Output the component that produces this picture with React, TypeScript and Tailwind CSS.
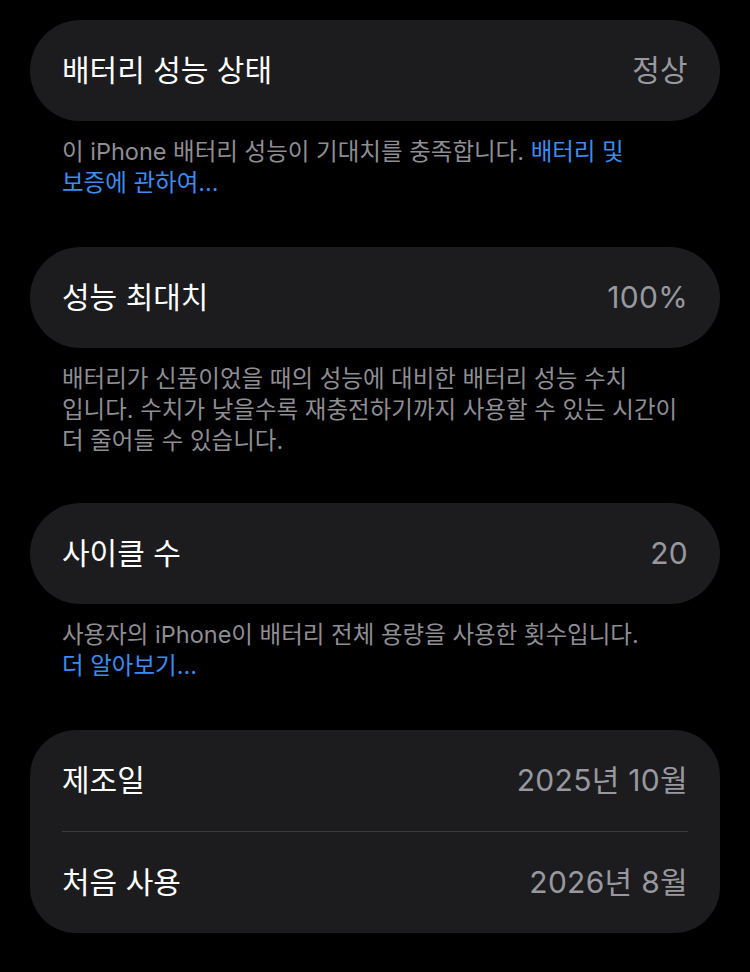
import React from 'react';

const FONT = 'font-["Inter","Noto_Sans_CJK_KR",sans-serif]';

const Row: React.FC<{ label: string; value: string }> = ({ label, value }) => (
  <div className="flex h-[101px] items-center justify-between px-[32px]">
    <span className="text-[30px] text-white">{label}</span>
    <span className="text-[30px] text-[#98989f] tracking-[0.3px]">{value}</span>
  </div>
);

const Footer: React.FC<{ children: React.ReactNode }> = ({ children }) => (
  <div className="px-[32px] pt-[15px] text-[23.5px] leading-[31px] text-[#8e8e93]">
    {children}
  </div>
);

const App: React.FC = () => {
  return (
    <div className={`min-h-[972px] w-[750px] bg-black px-[30px] pt-[20px] ${FONT}`}>
      <div className="rounded-full bg-[#1c1c1e]">
        <Row label="배터리 성능 상태" value="정상" />
      </div>
      <Footer>
        <div className="whitespace-nowrap">
          이 iPhone 배터리 성능이 기대치를 충족합니다. <span className="text-[#3b8cf2]">배터리 및</span>
        </div>
        <div className="whitespace-nowrap text-[#3b8cf2]">보증에 관하여...</div>
      </Footer>

      <div className="mt-[49px] rounded-full bg-[#1c1c1e]">
        <Row label="성능 최대치" value="100%" />
      </div>
      <Footer>
        <div className="whitespace-nowrap">배터리가 신품이었을 때의 성능에 대비한 배터리 성능 수치</div>
        <div className="whitespace-nowrap">입니다. 수치가 낮을수록 재충전하기까지 사용할 수 있는 시간이</div>
        <div className="whitespace-nowrap">더 줄어들 수 있습니다.</div>
      </Footer>

      <div className="mt-[47px] rounded-full bg-[#1c1c1e]">
        <Row label="사이클 수" value="20" />
      </div>
      <Footer>
        <div className="whitespace-nowrap">사용자의 iPhone이 배터리 전체 용량을 사용한 횟수입니다.</div>
        <div className="whitespace-nowrap text-[#3b8cf2]">더 알아보기...</div>
      </Footer>

      <div className="mt-[49px] rounded-[46px] bg-[#1c1c1e]">
        <Row label="제조일" value="2025년 10월" />
        <div className="mx-[32px] h-px bg-[#3a3a3c]" />
        <Row label="처음 사용" value="2026년 8월" />
      </div>
    </div>
  );
};

export default App;
